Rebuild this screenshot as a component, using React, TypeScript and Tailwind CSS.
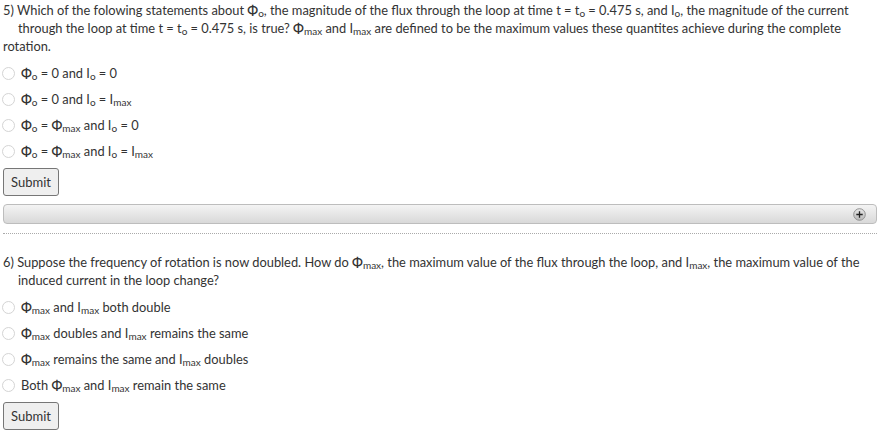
import React from "react";

const Sub = ({ children }: { children: React.ReactNode }) => (
  <sub className="relative top-[2px] align-baseline text-[10px] leading-none">{children}</sub>
);

const Phi = () => <span className="font-semibold">Φ</span>;

function Radio({ children }: { children: React.ReactNode }) {
  return (
    <label className="flex h-[26px] items-center gap-[6px] pl-[2px]">
      <span className="h-[13px] w-[13px] shrink-0 rounded-full border border-[#d4d4d4] bg-white" />
      <span className="whitespace-nowrap">{children}</span>
    </label>
  );
}

function SubmitButton() {
  return (
    <button className="ml-[3px] h-[28px] rounded-[3px] border border-[#767676] bg-[#efefef] px-[7px] text-[13px] text-[#333]">
      Submit
    </button>
  );
}

export default function App() {
  return (
    <div
      className="w-[883px] bg-white text-[12.85px] leading-[18px] text-[#333]"
      style={{ fontFamily: "Lato, 'Noto Sans', sans-serif" }}
    >
      <div className="px-[3px] pt-[1px]">
        <div className="whitespace-nowrap">
          5) Which of the folowing statements about <Phi />
          <Sub>o</Sub>, the magnitude of the flux through the loop at time t = t<Sub>o</Sub> = 0.475 s, and I
          <Sub>o</Sub>, the magnitude of the current
        </div>
        <div className="whitespace-nowrap pl-[15px]">
          through the loop at time t = t<Sub>o</Sub> = 0.475 s, is true? <Phi />
          <Sub>max</Sub> and I<Sub>max</Sub> are defined to be the maximum values these quantites achieve during the
          complete
        </div>
        <div>rotation.</div>
      </div>

      <div className="mt-[5px] flex flex-col">
        <Radio>
          <Phi />
          <Sub>o</Sub> = 0 and I<Sub>o</Sub> = 0
        </Radio>
        <Radio>
          <Phi />
          <Sub>o</Sub> = 0 and I<Sub>o</Sub> = I<Sub>max</Sub>
        </Radio>
        <Radio>
          <Phi />
          <Sub>o</Sub> = <Phi />
          <Sub>max</Sub> and I<Sub>o</Sub> = 0
        </Radio>
        <Radio>
          <Phi />
          <Sub>o</Sub> = <Phi />
          <Sub>max</Sub> and I<Sub>o</Sub> = I<Sub>max</Sub>
        </Radio>
      </div>

      <div className="mt-[4px]">
        <SubmitButton />
      </div>

      <div className="ml-[3px] mr-[6px] mt-[8px] flex h-[20px] items-center justify-end rounded-[4px] border border-[#bdbdbd] bg-gradient-to-b from-[#f4f4f4] to-[#d9d9d9] pr-[10px]">
        <svg width="13" height="13" viewBox="0 0 13 13">
          <defs>
            <linearGradient id="pg" x1="0" y1="0" x2="0" y2="1">
              <stop offset="0" stopColor="#e8e8e8" />
              <stop offset="1" stopColor="#b8b8b8" />
            </linearGradient>
          </defs>
          <circle cx="6.5" cy="6.5" r="5.8" fill="url(#pg)" stroke="#8a8a8a" strokeWidth="0.9" />
          <path d="M6.5 3.3v6.4M3.3 6.5h6.4" stroke="#222" strokeWidth="1.3" />
        </svg>
      </div>

      <div className="ml-[3px] mr-[6px] mt-[9px] border-t border-dotted border-[#aaa]" />

      <div className="mt-[19px] px-[3px]">
        <div className="whitespace-nowrap">
          6) Suppose the frequency of rotation is now doubled. How do <Phi />
          <Sub>max</Sub>, the maximum value of the flux through the loop, and I<Sub>max</Sub>, the maximum value of the
        </div>
        <div className="whitespace-nowrap pl-[15px]">induced current in the loop change?</div>
      </div>

      <div className="mt-[5px] flex flex-col">
        <Radio>
          <Phi />
          <Sub>max</Sub> and I<Sub>max</Sub> both double
        </Radio>
        <Radio>
          <Phi />
          <Sub>max</Sub> doubles and I<Sub>max</Sub> remains the same
        </Radio>
        <Radio>
          <Phi />
          <Sub>max</Sub> remains the same and I<Sub>max</Sub> doubles
        </Radio>
        <Radio>
          Both <Phi />
          <Sub>max</Sub> and I<Sub>max</Sub> remain the same
        </Radio>
      </div>

      <div className="mt-[4px] pb-[4px]">
        <SubmitButton />
      </div>
    </div>
  );
}
